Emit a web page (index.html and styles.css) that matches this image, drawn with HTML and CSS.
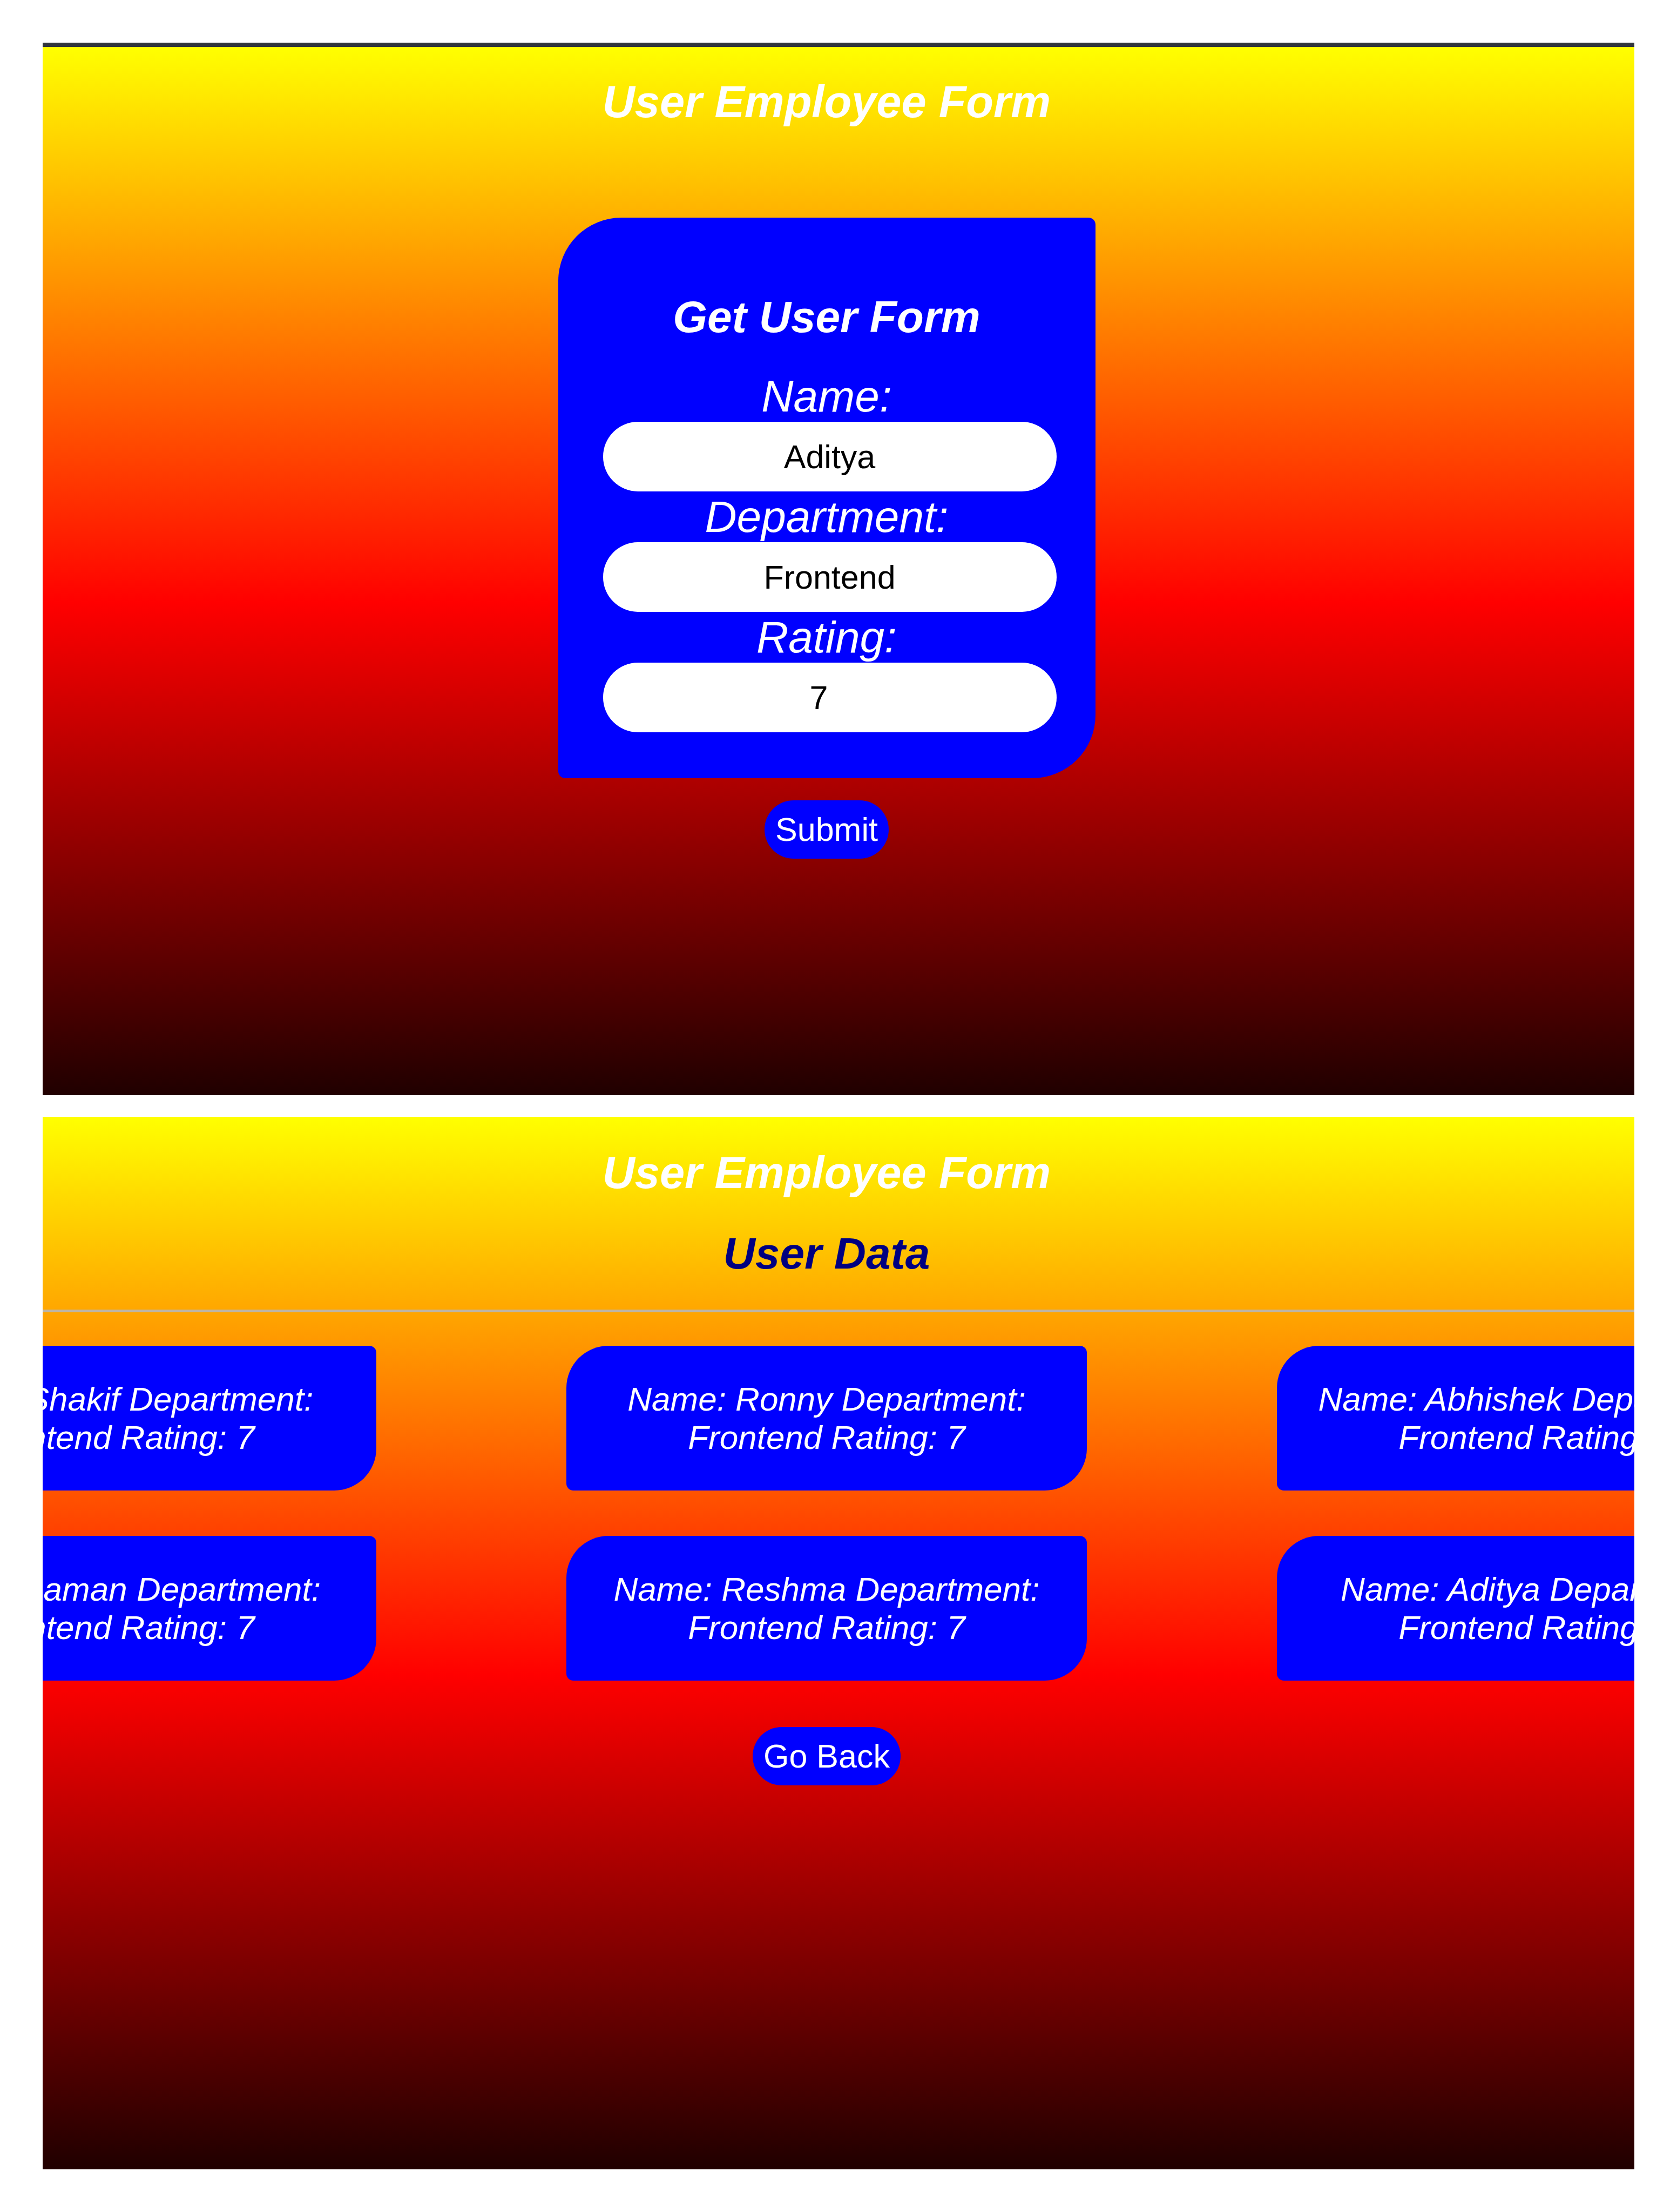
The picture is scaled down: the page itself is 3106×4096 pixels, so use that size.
FILE: index.html
```html
<!DOCTYPE html>
<html lang="en">
<head>
<meta charset="utf-8">
<title>User Employee Form</title>
<link rel="stylesheet" href="styles.css">
</head>
<body>
<main class="page">
  <section class="screen screen--form">
    <h1 class="title">User Employee Form</h1>
    <form class="user-form">
      <h2 class="form-title">Get User Form</h2>
      <label class="field-label" for="name">Name:</label>
      <input class="field" id="name" type="text" value="Aditya">
      <label class="field-label" for="dept">Department:</label>
      <input class="field" id="dept" type="text" value="Frontend">
      <label class="field-label" for="rating">Rating:</label>
      <input class="field field--number" id="rating" type="number" value="7">
    </form>
    <button class="pill-btn submit-btn" type="button">Submit</button>
  </section>

  <section class="screen screen--data">
    <h1 class="title">User Employee Form</h1>
    <h2 class="data-title">User Data</h2>
    <hr class="divider">
    <div class="card-grid">
      <div class="user-card"><p>Name: Shakif Department: Frontend Rating: 7</p></div>
      <div class="user-card"><p>Name: Ronny Department: Frontend Rating: 7</p></div>
      <div class="user-card"><p>Name: Abhishek Department: Frontend Rating: 7</p></div>
      <div class="user-card"><p>Name: Raman Department: Frontend Rating: 7</p></div>
      <div class="user-card"><p>Name: Reshma Department: Frontend Rating: 7</p></div>
      <div class="user-card"><p>Name: Aditya Department: Frontend Rating: 7</p></div>
    </div>
    <button class="pill-btn back-btn" type="button">Go Back</button>
  </section>
</main>
</body>
</html>
```

FILE: styles.css
```css
html, body {
  margin: 0;
  padding: 0;
}

body {
  background: #ffffff;
  font-family: "Liberation Sans", Arial, sans-serif;
}

.page {
  padding: 79px;
  display: flex;
  flex-direction: column;
  gap: 40px;
}

.screen {
  height: 1949px;
  box-sizing: border-box;
  overflow: hidden;
  padding-right: 44px;
  background: linear-gradient(#ffff00 0%, #ff0000 53%, #200000 100%);
}

.screen--form {
  border-top: 8px solid #32363c;
  padding-top: 54px;
}

.screen--data {
  padding-top: 56px;
}

.title {
  margin: 0;
  text-align: center;
  font-size: 83px;
  font-weight: bold;
  font-style: italic;
  line-height: normal;
  color: #ffffff;
}

/* ---------- form screen ---------- */
.user-form {
  width: 995px;
  box-sizing: border-box;
  margin: 166px auto 0;
  padding: 137px 0 85px;
  background: #0000ff;
  border-radius: 117px 13px 117px 13px;
}

.form-title {
  margin: 0 0 53px;
  text-align: center;
  font-size: 82px;
  font-weight: bold;
  font-style: italic;
  line-height: normal;
  color: #ffffff;
}

.field-label {
  display: block;
  text-align: center;
  font-size: 82px;
  font-style: italic;
  line-height: normal;
  color: #ffffff;
}

.field {
  display: block;
  width: 840px;
  height: 129px;
  box-sizing: border-box;
  margin: 0 0 0 83px;
  padding: 0;
  border: none;
  border-radius: 65px;
  background: #ffffff;
  color: #000000;
  font-family: "Liberation Sans", Arial, sans-serif;
  font-size: 61px;
  text-align: center;
  outline: none;
}

.field--number {
  padding-right: 40px;
  -moz-appearance: textfield;
}

.field--number::-webkit-inner-spin-button,
.field--number::-webkit-outer-spin-button {
  -webkit-appearance: none;
  margin: 0;
}

.pill-btn {
  display: block;
  margin: 0 auto;
  padding: 19px 20px;
  border: none;
  border-radius: 60px;
  background: #0000ff;
  color: #ffffff;
  font-family: "Liberation Sans", Arial, sans-serif;
  font-size: 61px;
  line-height: 70px;
}

.submit-btn {
  margin-top: 41px;
}

/* ---------- data screen ---------- */
.data-title {
  margin: 54px 0 0;
  text-align: center;
  font-size: 82px;
  font-weight: bold;
  font-style: italic;
  line-height: normal;
  color: #000080;
}

.divider {
  height: 5px;
  margin: 57px -44px 0 0;
  border: 0;
  background: #bdb5a8;
}

.card-grid {
  display: grid;
  grid-template-columns: repeat(3, 964px);
  column-gap: 352px;
  row-gap: 84px;
  width: 3596px;
  margin: 62px 0 0 calc((100% - 3596px) / 2);
}

.user-card {
  box-sizing: border-box;
  padding: 63px 40px;
  background: #0000ff;
  border-radius: 78px 13px 78px 13px;
  color: #ffffff;
  font-size: 62px;
  font-style: italic;
  line-height: 71px;
  text-align: center;
}

.user-card p {
  margin: 0;
}

.back-btn {
  margin-top: 86px;
}
```
